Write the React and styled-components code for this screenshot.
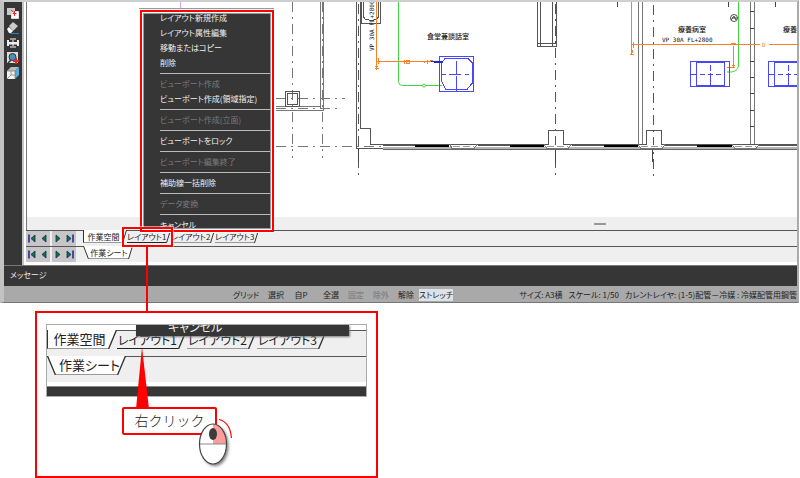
import React from "react";
import styled, { createGlobalStyle, css } from "styled-components";

const GlobalStyle = createGlobalStyle`
  *, *::before, *::after { box-sizing: border-box; }
  body {
    margin: 0;
    background: #fff;
    color: #222;
    font-family: "Noto Sans CJK JP", "Noto Sans", sans-serif;
    font-size: 8px;
    font-feature-settings: "palt";
  }
  button {
    margin: 0;
    padding: 0;
    border: 0;
    background: none;
    color: inherit;
    font: inherit;
    font-feature-settings: inherit;
    white-space: nowrap;
  }
`;

const Page = styled.main`
  display: flex;
  flex-direction: column;
  gap: 8px;
`;

/* ---------- application window ---------- */

const AppWindow = styled.section`
  position: relative;
  margin-right: 1px;
  border: solid #c2c2c2;
  border-width: 2px 2px 1px 4px;
  border-top-color: #cfcfcf;
  border-right-color: #aaa;
  border-bottom-color: #777;
`;

const Body = styled.div`
  display: flex;
  background: #363636;
`;

const ToolRail = styled.nav`
  display: flex;
  flex-direction: column;
  align-items: center;
  gap: 3px;
  width: 18px;
  padding-top: 5px;
`;

const ToolButton = styled.button`
  width: 12px;
  height: 12px;
  line-height: 0;
`;

const Workspace = styled.div`
  flex: 1;
  min-width: 0;
  padding: 0 0 3px 2px;
  border-left: 2px solid #c4c4c4;
  background: #fff;
`;

const Canvas = styled.div`
  height: 215px;
  overflow: hidden;
  border-left: 1px solid #777;
  svg { display: block; }
`;

const ScrollTrack = styled.div`
  display: flex;
  justify-content: center;
  align-items: center;
  height: 13px;
  padding-left: 375px;
  background: #efefef;
  border-left: 1px solid #777;
`;

const ScrollGrip = styled.span`
  width: 12px;
  height: 2px;
  background: #999;
`;

const Strip = styled.div`
  display: flex;
  align-items: flex-start;
  height: ${(p) => (p.$large ? 26 : 16)}px;
  border-top: 1px solid #555;
  background: #efefef;
`;

const NavGroup = styled.div`
  display: flex;
  height: 15px;
  margin-right: ${(p) => (p.$last ? 7 : 2)}px;
  background: #c6c6c6;
`;

const NavButton = styled.button`
  width: 12px;
  line-height: 0;
`;

const Tab = styled.button`
  position: relative;
  width: ${(p) => (p.$large ? 61 : 39)}px;
  height: ${(p) => (p.$large ? 18 : 12)}px;
  border-bottom: 1px solid #999;
  font-size: ${(p) => (p.$large ? 12 : 8)}px;
  line-height: ${(p) => (p.$large ? 18 : 11)}px;
  ${(p) => p.$active && css`
    margin-top: -1px;
    height: ${p.$large ? 19 : 13}px;
    padding-left: ${p.$large ? 3 : 1}px;
    background: #fff;
    font-size: ${p.$large ? 13 : 8}px;
  `}
  ${(p) => p.$edge && css`border-left: 1px solid #333;`}
  ${(p) => p.$picked && css`border-bottom-color: #222;`}
`;

const SlantSvg = styled.svg`
  flex: none;
  display: block;
  margin-top: -1px;
`;

const Highlight = styled.span`
  position: absolute;
  z-index: 3;
  inset: -4px -7px -5px -5px;
  border: 2px solid #f00;
  box-shadow: 0 0 0 1px #fff8;
  pointer-events: none;
  &::after {
    content: "";
    position: absolute;
    top: 100%;
    left: 22px;
    width: 2px;
    height: 66px;
    background: #f00;
  }
`;

const MessageBar = styled.div`
  height: 21px;
  padding: 3px 6px;
  border-top: 1px solid #777;
  background: #363636;
  color: #eee;
  line-height: 11px;
`;

const StatusBar = styled.footer`
  display: flex;
  justify-content: space-between;
  align-items: center;
  height: 16px;
  padding: 1px 0 0 225px;
  background: #a9a9a9;
  line-height: 12px;
  white-space: nowrap;
`;

const StatusGroup = styled.div`
  display: flex;
  gap: ${(p) => p.$gap}px;
`;

const StatusButton = styled.button`
  width: ${(p) => (p.$wide ? 34 : 24)}px;
  height: 12px;
  margin-left: ${(p) => (p.$apart ? 5 : 0)}px;
  background: ${(p) => (p.$on ? "#dce3e8" : "transparent")};
  &:disabled { color: #777; }
`;

/* ---------- context menu ---------- */

const MenuFrame = styled.div`
  position: absolute;
  z-index: 2;
  left: 136px;
  top: 8px;
  width: 134px;
  height: 222px;
  padding: 1px;
  border: 2px solid #f00;
  background: #fff;
  box-shadow: 0 1px 0 #fff;
`;

const Menu = styled.div`
  display: flex;
  flex-direction: column;
  height: 100%;
  overflow: hidden;
  padding-left: 16px;
  border: 1px solid #999;
  background: #363636;
  color: #f2f2f2;
`;

const MenuItem = styled.button`
  flex: none;
  height: 15px;
  line-height: 15px;
  text-align: left;
  &:first-child { margin-top: -4px; }
  &:disabled { color: #7b7b7b; }
`;

const MenuRule = styled.hr`
  flex: none;
  width: 100%;
  height: 1px;
  margin: 3px 0 2px;
  border: 0;
  background: #bbb;
`;

/* ---------- enlarged detail ---------- */

const Detail = styled.section`
  position: relative;
  width: 343px;
  height: 167px;
  max-width: calc(100% - 35px);
  margin-left: 35px;
  padding: 11px 9px;
  border: 2px solid #f00;
`;

const Inset = styled.div`
  position: relative;
  overflow: hidden;
  padding-top: 5px;
  border: 1px solid #aaa;
  background: #fff;
`;

const InsetFooter = styled.div`
  height: 10px;
  margin-top: 4px;
  border-top: 1px solid #888;
  background: #363636;
`;

const MenuFoot = styled.div`
  position: absolute;
  z-index: 1;
  top: 0;
  left: 89px;
  right: 17px;
  height: 11px;
  padding-left: 32px;
  overflow: hidden;
  background: #363636;
  box-shadow: 1px 1px 2px #777;
  color: #eee;
  font-size: 12px;
  line-height: 3px;
`;

const Callout = styled.div`
  position: absolute;
  left: 85px;
  top: 94px;
  width: 95px;
  height: 28px;
  border: 2px solid #f00;
  border-radius: 2px;
  background: #fff;
  font-size: 14px;
  font-weight: 300;
  font-feature-settings: normal;
  line-height: 22px;
  text-align: center;
`;

const Pointer = styled.svg`
  position: absolute;
  left: 12px;
  bottom: 100%;
`;

const Mouse = styled.svg`
  position: absolute;
  left: 74px;
  top: 8px;
`;

function Slant({ large, back, filled }) {
  const w = large ? 9 : back ? 6 : 5;
  const h = large ? 19 : 13;
  const x1 = back ? 0.5 : w - 0.5;
  const x2 = back ? w - 0.5 : 0.5;
  const edge = back ? w : 0;
  return (
    <SlantSvg width={w} height={h} aria-hidden="true">
      {filled && <path d={`M${edge} 0H${x1}L${x2} ${h}H${edge}Z`} fill="#fff" />}
      <path d={`M${x1} 0L${x2} ${h}`} stroke="#333" strokeWidth={large ? 1.4 : 1} />
    </SlantSvg>
  );
}

const navIcons = [
  ["先頭", "M9 4L5 7.500L9 11Z", 3],
  ["前へ", "M8 4L4 7.500L8 11Z"],
  ["次へ", "M4 4L8 7.500L4 11Z"],
  ["末尾", "M3 4L7 7.500L3 11Z", 9],
];

function Nav() {
  return [navIcons.slice(0, 2), navIcons.slice(2)].map((group, i) => (
    <NavGroup key={i} $last={i === 1}>
      {group.map(([label, d, bar]) => (
        <NavButton key={label} aria-label={label}>
          <svg width="12" height="15">
            <path d={d} fill="#0a7a2a" stroke="#1c2470" strokeWidth=".8" />
            {bar && <path d={`M${bar} 3.500V11.500`} stroke="#22228c" strokeWidth="1.500" />}
          </svg>
        </NavButton>
      ))}
    </NavGroup>
  ));
}

function LayoutTabs({ large }) {
  return (
    <>
      <Tab $large={large} $active $edge>作業空間</Tab>
      <Slant large={large} filled />
      {["レイアウト1", "レイアウト2", "レイアウト3"].map((name, i) => (
        <React.Fragment key={name}>
          <Tab $large={large} $picked={i === 0}>
            {name}
            {!large && i === 0 && <Highlight />}
          </Tab>
          <Slant large={large} />
        </React.Fragment>
      ))}
    </>
  );
}

function SheetTab({ large }) {
  return (
    <>
      <Slant large={large} back filled />
      <Tab $large={large} $active>作業シート</Tab>
      <Slant large={large} filled />
    </>
  );
}

const tools = [
  ["複写", <><path d="M0 1h8v7H0z" fill="#c8c8c8" /><path d="M4.500 4.500h7v7h-7z" fill="#fff" stroke="#ddd" /><path d="M4 3l5 4M7.500 4v5M5.500 6.500h4" stroke="#e32a1c" /></>],
  ["消去", <><path d="M6 0l5 4-5 5-4-5z" fill="#ccc" /><path d="M2 5l4 4-2 2H2L0 7z" fill="#fff" /><path d="M3 11.500h9" stroke="#2b7fb5" /></>],
  ["伸縮", <><path d="M3 1h6v2H7v6h2v2H3V9h2V3H3z" fill="#999" /><path d="M0 3h2v2h8V3h2v6h-2V7.500H2V9H0z" fill="#eee" /></>],
  ["拡大", <><path d="M0 0h11v11H0z" fill="#ddd" /><circle cx="5.500" cy="5" r="3.500" fill="#4a90b8" stroke="#333" /><path d="M1 11l3-3" stroke="#333" strokeWidth="1.500" /><path d="M6 9h6M9 6v6" stroke="#e32a1c" strokeWidth="2" /></>],
  ["立体表示", <><path d="M0 4h8v8H0z" fill="#f3f3f3" /><path d="M0 4l4-4h8L8 4z" fill="#bbb" /><path d="M8 4l4-4v8l-4 4z" fill="#53aee0" /><path d="M0 12l4-4h4M4 8V4M0 4h8v8" fill="none" stroke="#777" strokeWidth=".7" /></>],
];

const menuItems = [
  ["レイアウト新規作成"],
  ["レイアウト属性編集"],
  ["移動またはコピー"],
  ["削除"],
  null,
  ["ビューポート作成", true],
  ["ビューポート作成(領域指定)"],
  null,
  ["ビューポート作成(立面)", true],
  null,
  ["ビューポートをロック"],
  null,
  ["ビューポート編集終了", true],
  null,
  ["補助線一括削除"],
  null,
  ["データ変換", true],
  null,
  ["キャンセル"],
];

const MonoLabel = styled.text`
  font-family: "DejaVu Sans Mono", monospace;
  font-size: 6px;
`;

const RoomLabel = styled.text`
  font-size: 7px;
  font-weight: 500;
  font-feature-settings: normal;
`;

function FloorPlan() {
  return (
    <svg
      width="100%"
      height="215"
      viewBox="27 2 771 215"
      preserveAspectRatio="xMinYMin slice"
      fill="none"
      role="img"
      aria-label="平面図"
      shapeRendering="crispEdges"
    >
      {/* grid axes */}
      <g stroke="#555" strokeDasharray="10 5 2 5">
        <path d="M292.500 2V158M322.500 2V158M276 98.500H345M276 108.500H342M276 146.500H382" stroke="#777" />
        <path d="M358.500 4V180M555.500 4V180M653.500 5V180" />
      </g>
      <path d="M358.500 148v14M555.500 148v16M652.500 148v14" stroke="#444" />
      <path d="M139 8.500H274" stroke="#999" />
      <path d="M180.500 2V8" stroke="#d9a0f0" />

      {/* left wing */}
      <path d="M320.500 2V107.500M323.500 2V110.500H276M276 106.500H320" stroke="#777" />
      <path d="M285.500 91.500h14v15h-14zM287.500 93.500h10v11h-10zM287 104.500h10" stroke="#555" />

      {/* outer wall */}
      <path d="M356.500 2V148.500H383M360.500 2V128.500H370.500V144.500H548.500V130.500H563.500V144.500H646.500V130.500H661.500V144.500H798" stroke="#555" />
      <path d="M383 148H798" stroke="#b5b5b5" strokeWidth="2" />
      <path d="M383 149.500H798" stroke="#666" />
      <path d="M383 145.500H415M478 145.500H510M572 145.500H604M665 145.500H698M759 145.500H798" stroke="#555" />
      <path d="M415 146H449M510 146H544M604 146H638M697 146H732" stroke="#000" strokeWidth="2" />
      <path d="M450 144.500l2 4h22l3-4M544 144.500l3 4h21l3-4M638 144.500l3 4h21l3-4M732 144.500l3 4h21l3-4" fill="#fff" stroke="#777" />
      <path d="M453 146.500H474M547 146.500H568M641 146.500H662M735 146.500H756" stroke="#999" strokeDasharray="7 3" />

      {/* partitions */}
      <path d="M638.500 2V144M642.500 2V144M750.500 2V144M754.500 2V144" stroke="#777" />
      <path d="M750 11.500h4M750 28.500h4M750 44.500h4M750 61.500h4M750 77.500h4M750 93.500h4M750 110.500h4M750 126.500h4M617.500 2v5M728.500 2v5M775.500 2v5" stroke="#444" />
      <path d="M537.500 2V46.500H556.500V2M540.500 2V46M552.500 2V46M537 43.500H556" stroke="#555" />
      <path d="M361.500 2V23.500H380.500V2M363.500 2V15q0 5 5 5h5q5 0 5-5V2" stroke="#555" />

      {/* refrigerant pipes */}
      <g stroke="#41d541" shapeRendering="auto">
        <path d="M398.500 2V81.500q0 4 4 4H442M738.500 2V66q-1 5-7 6H727" />
        <circle cx="424" cy="85.500" r="1.500" fill="#fff" />
      </g>

      {/* drain pipes */}
      <g stroke="#ff7f27">
        <path d="M376.500 2V70M376 61.500H436M631.500 2V55M631 44.500H760M769 44.500H798M733.500 46V67M727 67.500H735" />
        <path d="M375 68h4M375 66h3M378.500 58v6M630 54h4M632.500 50v3M633.500 42v6M731 43h5M732 65h3M404.500 60v4M406 60h3v3h-3zM421 61h3v2M427.500 60v4M430 60h3" />
      </g>
      <MonoLabel x="762" y="47" fill="#ff7f27">D</MonoLabel>

      {/* cassette units */}
      <g stroke="#4747ff">
        <path d="M439.500 56.500h34v35h-34z" />
        <path d="M445 58.500h23l4 4v21l-5 6h-21l-5-9V64z" />
        <path d="M456.500 61v13M456.500 76v15M441 74.500h5M449 74.500h12M465 74.500h4" />
        <path d="M431 61.500h12M434 62.500h8" stroke="#2222dd" />
        <g id="duct-unit">
          <path d="M690.500 61.500h39v25h-39zM696.500 62.500h28v23h-28zM710.500 65v6M710.500 73v14M691 74.500h6M700 74.500h5M708 74.500h5M716 74.500h5" />
        </g>
        <use href="#duct-unit" x="78" />
      </g>

      <g shapeRendering="auto" stroke="#222" strokeWidth=".8">
        <circle cx="734" cy="18" r="3.500" />
        <path d="M731 20l3-4 2 4M732 18h5" />
      </g>
      <g fill="#111">
        <RoomLabel x="427" y="39">食堂兼談話室</RoomLabel>
        <RoomLabel x="678" y="32">療養病室</RoomLabel>
        <RoomLabel x="783" y="32">療養病室</RoomLabel>
        <MonoLabel x="662" y="42">VP 30A FL+2800</MonoLabel>
        <MonoLabel transform="translate(374 51) rotate(-90)">VP 30A FL+2800</MonoLabel>
      </g>
    </svg>
  );
}

export default function App() {
  return (
    <Page>
      <GlobalStyle />
      <AppWindow>
        <Body>
          <ToolRail aria-label="ツール">
            {tools.map(([label, art]) => (
              <ToolButton key={label} aria-label={label}>
                <svg width="12" height="12">{art}</svg>
              </ToolButton>
            ))}
          </ToolRail>
          <Workspace>
            <Canvas><FloorPlan /></Canvas>
            <ScrollTrack><ScrollGrip /></ScrollTrack>
            <Strip><Nav /><LayoutTabs /></Strip>
            <Strip><Nav /><SheetTab /></Strip>
          </Workspace>
        </Body>
        <MessageBar>メッセージ</MessageBar>
        <StatusBar>
          <StatusGroup $gap={1}>
            <StatusButton $wide>グリッド</StatusButton>
            <StatusButton>選択</StatusButton>
            <StatusButton>自P</StatusButton>
            <StatusButton $apart>全選</StatusButton>
            <StatusButton disabled>固定</StatusButton>
            <StatusButton disabled>除外</StatusButton>
            <StatusButton>解除</StatusButton>
            <StatusButton $wide $on>ストレッチ</StatusButton>
          </StatusGroup>
          <StatusGroup $gap={6}>
            <span>サイズ: A3横</span>
            <span>スケール: 1/50</span>
            <span>カレントレイヤ: (1-5)配管－冷媒 : 冷媒配管用鋼管</span>
          </StatusGroup>
        </StatusBar>
        <MenuFrame>
          <Menu role="menu">
            {menuItems.map((item, i) =>
              item ? (
                <MenuItem key={i} role="menuitem" disabled={item[1]}>{item[0]}</MenuItem>
              ) : (
                <MenuRule key={i} />
              )
            )}
          </Menu>
        </MenuFrame>
      </AppWindow>

      <Detail>
        <Inset>
          <MenuFoot>キャンセル</MenuFoot>
          <Strip $large><LayoutTabs large /></Strip>
          <Strip $large><SheetTab large /></Strip>
          <InsetFooter />
        </Inset>
        <Callout>
          <Pointer width="14" height="62" aria-hidden="true">
            <path d="M6 0L13 62H0Z" fill="#f00" />
          </Pointer>
          右クリック
          <Mouse width="40" height="52" aria-hidden="true">
            <defs>
              <filter id="mouse-shadow" x="-20%" y="-20%" width="150%" height="150%">
                <feDropShadow dx="2" dy="2" stdDeviation="1.500" floodOpacity=".5" />
              </filter>
            </defs>
            <ellipse cx="15" cy="27" rx="13.500" ry="20" fill="#fff" filter="url(#mouse-shadow)" />
            <path d="M15 7A13.500 20 0 0 1 28.500 27H15Z" fill="#ff9c9c" />
            <path d="M1.500 27H28.500" stroke="#888" />
            <ellipse cx="15" cy="27" rx="13.500" ry="20" fill="none" stroke="#444" strokeWidth="1.200" />
            <ellipse cx="15" cy="17" rx="4" ry="6" fill="#3c3c3c" />
            <path d="M21 2.500Q32 5 33.500 21" fill="none" stroke="#f00" strokeWidth="1.200" />
          </Mouse>
        </Callout>
      </Detail>
    </Page>
  );
}
